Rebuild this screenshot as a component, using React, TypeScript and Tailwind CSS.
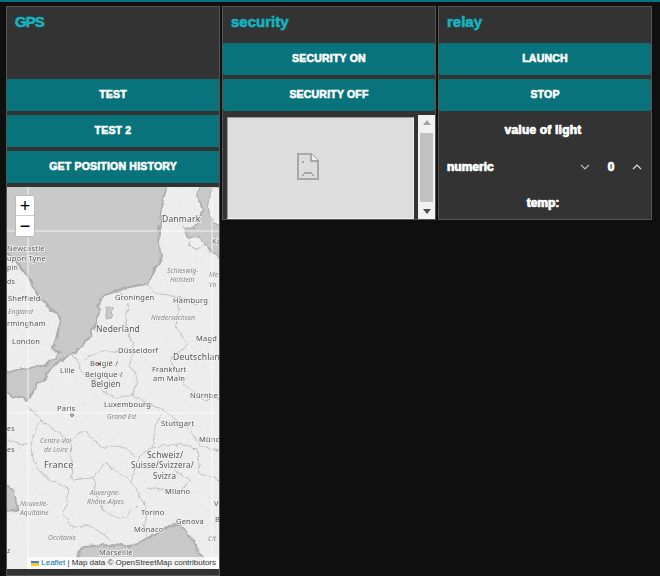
const sans = "font-['Liberation_Sans',Arial,sans-serif]";
const lcd = "[text-shadow:-0.4px_0_#9cf,0.4px_0_#fc9]";

function Btn({ children, rounded }: { children: string; rounded?: boolean }) {
  return (
    <button className={`h-8 w-full bg-[#08737a] pb-[1px] text-white text-[10.5px] font-bold uppercase tracking-[0.2px] [-webkit-text-stroke:0.6px_white] ${rounded ? "rounded-[2px]" : ""}`}>
      {children}
    </button>
  );
}

function Title({ children, tight }: { children: string; tight?: boolean }) {
  return <h2 className={`text-[15px] leading-[20px] font-bold text-[#13b4c2] [-webkit-text-stroke:0.6px_#13b4c2] ${tight ? "tracking-[-1px]" : ""}`}>{children}</h2>;
}

const cities: [string, number, number, number][] = [
  ["Danmark", 162, 222, 8.5],
  ["Ka", 212, 244, 7.5],
  ["Newcastle", 7, 251, 7.5],
  ["upon Tyne", 7, 261, 7.5],
  ["pin", 7, 270, 7],
  ["ds", 7, 284, 7],
  ["Sheffield", 8, 301, 7.5],
  ["rmingham", 7, 326, 7.5],
  ["London", 12, 344, 7.5],
  ["Groningen", 115, 300, 7.5],
  ["Hamburg", 173, 303, 7.5],
  ["Nederland", 96, 332, 8.5],
  ["Düsseldorf", 118, 353, 7.5],
  ["Deutschlan", 173, 360, 8.5],
  ["België /", 90, 366, 7.5],
  ["Belgique /", 85, 377, 7.5],
  ["Belgien", 91, 387, 8],
  ["Lille", 60, 373, 7.5],
  ["Frankfurt", 152, 372, 7.5],
  ["am Main", 153, 381, 7.5],
  ["Magd", 196, 341, 7.5],
  ["Luxembourg", 104, 407, 7.5],
  ["Nürnbe", 190, 398, 7.5],
  ["Paris", 57, 411, 7.5],
  ["Stuttgart", 161, 426, 7.5],
  ["Münc", 199, 442, 7.5],
  ["es", 7, 431, 7],
  ["es", 7, 452, 7],
  ["France", 44, 468, 9],
  ["Schweiz/", 147, 458, 8.5],
  ["Suisse/Svizzera/", 131, 468, 8],
  ["Svizra", 153, 479, 8],
  ["Milano", 165, 494, 7.5],
  ["V", 214, 506, 7.5],
  ["Torino", 141, 515, 7.5],
  ["B", 215, 522, 7.5],
  ["Genova", 176, 524, 7.5],
  ["Monaco", 134, 532, 7.5],
  ["z", 7, 553, 7],
  ["Marseille", 99, 555, 7.5],
];

const regions: [string, number, number][] = [
  ["Schleswig-", 167, 273],
  ["Me", 209, 277],
  ["Holstein", 170, 282],
  ["Vo", 209, 287],
  ["England", 8, 314],
  ["Niedersachsen", 151, 320],
  ["Grand Est", 107, 419],
  ["Centre-Val", 40, 443],
  ["de Loire", 44, 452],
  ["Auvergne-", 90, 495],
  ["Rhône-Alpes", 87, 504],
  ["Nouvelle-", 20, 506],
  ["Aquitaine", 20, 515],
  ["Occitanie", 48, 540],
  ["Cit", 208, 541],
];

function MapArt() {
  return (
    <svg viewBox="7 187 212 382" className="block h-[382px] w-[212px]">
      <defs>
        <filter id="terrain" x="0" y="0" width="100%" height="100%">
          <feTurbulence type="fractalNoise" baseFrequency="0.32" numOctaves="3" seed="7" />
          <feColorMatrix values="0 0 0 0 0.6  0 0 0 0 0.6  0 0 0 0 0.6  1.3 0 0 0 -0.5" />
        </filter>
        <filter id="wobble" x="-5%" y="-5%" width="110%" height="110%">
          <feTurbulence type="fractalNoise" baseFrequency="0.12" numOctaves="3" seed="3" result="n" />
          <feDisplacementMap in="SourceGraphic" in2="n" scale="6" xChannelSelector="R" yChannelSelector="G" />
        </filter>
        <filter id="soft"><feGaussianBlur stdDeviation="0.4" /></filter>
      </defs>
      <g filter="url(#soft)">
        <rect x="7" y="187" width="212" height="382" fill="#efefef" />
        <rect x="7" y="187" width="212" height="382" filter="url(#terrain)" opacity="0.3" />
        <g filter="url(#wobble)">
          {/* North Sea and Channel */}
          <path
            d="M0 180H168L163 200L160 220L158 244L163 254L155 270L150 280L145 285L118 290L100 300L97 320L87 340L74 353L57 362L40 382L27 400L13 395L0 390V373L47 365L60 353L53 348L62 318L43 303L27 275L18 265L0 245Z"
            fill="#c9c9c9" stroke="#adadad" strokeWidth="2"
          />
          {/* IJsselmeer */}
          <path d="M106 306L114 308L113 318L106 319Z" fill="#c9c9c9" stroke="#adadad" />
          {/* Kattegat and Baltic */}
          <path d="M198 180H226V262L212 252L205 245L190 240L183 228L193 230L203 210L198 200Z" fill="#c9c9c9" stroke="#adadad" strokeWidth="1.5" />
          <path d="M212 187H226V228L212 222L208 208Z" fill="#efefef" stroke="#adadad" />
          <path d="M190 238L199 236L204 243L197 249L189 245Z" fill="#efefef" stroke="#adadad" />
          {/* Biscay */}
          <path d="M0 480L14 492L18 510L0 512Z" fill="#c9c9c9" stroke="#adadad" strokeWidth="1.5" />
          {/* Mediterranean */}
          <path d="M77 580V558L83 546L110 545L130 546L147 539L170 526L180 524L190 536L203 558L208 580Z" fill="#c9c9c9" stroke="#adadad" strokeWidth="2" />
          {/* Borders */}
          <g fill="none" stroke="#c0c0c0" strokeWidth="1">
            <path d="M118 290L128 305L125 325L132 340L135 352L128 365L138 380L132 395L118 398L105 392L92 380L82 372L78 360L67 353" />
            <path d="M85 358L100 352L118 352M92 380L104 372L124 376" />
            <path d="M132 395L150 404L163 410L155 425L151 448L140 455L131 482L138 493" />
            <path d="M145 285L160 295L180 297L195 305M180 297L176 325L188 345L170 360L185 385L205 400L219 398" />
            <path d="M163 410L172 418L190 430L201 446L219 450" />
            <path d="M151 448L175 445L197 448L200 474L219 480M138 493L147 510L144 525L147 539M172 470L190 480L180 490L160 490L147 487" />
            <path d="M28 404L40 420L30 445L36 470L69 490L64 515L72 528L90 525L110 540M40 420L70 440L85 430L100 448L120 445L135 455" />
            <path d="M70 440L72 480L93 478L105 462L130 482M93 478L102 510L122 520L138 505M7 440L28 445" />
          </g>
        </g>
        {cities.map(([t, x, y, s]) => (
          <text key={t + y} x={x} y={y} fontSize={s} fill="#555" stroke="#f3f3f3" strokeWidth="1.5" paintOrder="stroke" fontFamily="'Noto Sans',sans-serif" letterSpacing="0.2">{t}</text>
        ))}
        {regions.map(([t, x, y]) => (
          <text key={t + y} x={x} y={y} fontSize="6.8" fontStyle="italic" fill="#858585" stroke="#f3f3f3" strokeWidth="1.2" paintOrder="stroke" fontFamily="'Noto Sans',sans-serif">{t}</text>
        ))}
        <circle cx="99" cy="364" r="1.3" fill="#a33" />
        <circle cx="72" cy="415" r="1.4" fill="none" stroke="#666" />
        {/* tile seams */}
        <path d="M7 231H219M7 413H219M28 187V569M212 187V569" stroke="#fff" strokeWidth="0.9" fill="none" opacity="0.85" />
      </g>
    </svg>
  );
}

export default function App() {
  return (
    <div className={`h-[576px] w-[660px] overflow-hidden bg-[#0f0f0f] ${sans}`}>
      <div className="h-[2px] bg-[#08737a]" />
      <div className="flex items-start gap-[2px] pl-[6px] pt-1">
        <section className="h-[570px] w-[214px] border border-[#555] bg-[#333]">
          <div className="h-[72px] pl-2 pt-[5px]"><Title tight>GPS</Title></div>
          <div className="flex flex-col gap-1">
            <Btn>Test</Btn>
            <Btn>Test 2</Btn>
            <Btn>Get position history</Btn>
            <div className="relative h-[382px] overflow-hidden">
              <MapArt />
              <div className="absolute left-2 top-2 flex w-5 flex-col rounded-[2px] border border-[#bbb] bg-white text-black">
                <div className="flex h-5 items-center justify-center border-b border-[#ccc] text-[18px] leading-none">+</div>
                <div className="flex h-5 items-center justify-center text-[18px] leading-none">−</div>
              </div>
              <div className="absolute bottom-0 right-0 flex h-3 items-center bg-white/80 pl-1 pr-[3px] text-[8px] leading-none text-[#333] whitespace-nowrap">
                <svg width="8" height="5" viewBox="0 0 8 5" className="mr-[2px]"><rect width="8" height="2.5" fill="#4C7BE1" /><rect y="2.5" width="8" height="2.5" fill="#FFD500" /></svg>
                <span className="text-[#0078a8]">Leaflet</span>
                <span>&nbsp;| Map data © OpenStreetMap contributors</span>
              </div>
            </div>
          </div>
        </section>

        <section className="h-[214px] w-[214px] border border-[#555] bg-[#333]">
          <div className="h-9 pl-2 pt-[5px]"><Title>security</Title></div>
          <div className="flex flex-col gap-1">
            <Btn rounded>Security on</Btn>
            <Btn rounded>Security off</Btn>
            <div className="flex h-[104px]">
              <div className="ml-1 mt-[2px] flex h-[102px] w-[187px] items-center justify-center border border-[#999] border-b-[#eee] border-r-[#eee] bg-[#ddd] pr-[25px]">
                <svg width="22" height="27" viewBox="0 0 22 27" shapeRendering="crispEdges" className="-mt-[4px]">
                  <path d="M1 1H14L21 8V26H1Z" fill="none" stroke="#a8a8a8" strokeWidth="2" />
                  <path d="M14 1V8H21" fill="#eee" stroke="#a8a8a8" strokeWidth="2" />
                  <path d="M5 8h2v2H5zM7 19h8v2H7zM5 21h2v2H5zM15 21h2v2h-2z" fill="#a8a8a8" />
                </svg>
              </div>
              <div className="ml-1 flex w-[17px] flex-col items-center justify-between bg-[#f1f1f1] py-[5px]">
                <svg width="8" height="5" viewBox="0 0 8 5"><path d="M0 5L4 0L8 5Z" fill="#a3a3a3" /></svg>
                <div className="h-[69px] w-[13px] bg-[#c1c1c1]" />
                <svg width="8" height="5" viewBox="0 0 8 5"><path d="M0 0L4 5L8 0Z" fill="#505050" /></svg>
              </div>
            </div>
          </div>
        </section>

        <section className="h-[214px] w-[214px] border border-[#555] bg-[#333]">
          <div className="h-9 pl-2 pt-[5px]"><Title>relay</Title></div>
          <div className="flex flex-col gap-1">
            <Btn rounded>Launch</Btn>
            <Btn rounded>Stop</Btn>
          </div>
          <div className={`mt-[9px] pr-1 text-center text-[12px] font-bold tracking-[0.2px] leading-[20px] text-white [-webkit-text-stroke:0.4px_white] ${lcd}`}>value of light</div>
          <div className={`mt-[17px] flex h-5 items-center pl-2 text-[12px] font-bold text-white [-webkit-text-stroke:0.4px_white] ${lcd}`}>
            <span className="w-[133px]">numeric</span>
            <svg width="10" height="6" viewBox="0 0 10 6"><path d="M1 1L5 5L9 1" fill="none" stroke="#bbb" strokeWidth="1.2" /></svg>
            <span className="ml-[17px] w-[8px] text-center">0</span>
            <svg width="10" height="6" viewBox="0 0 10 6" className="ml-[17px]"><path d="M1 5L5 1L9 5" fill="none" stroke="#ddd" strokeWidth="1.2" /></svg>
          </div>
          <div className={`mt-[16px] pr-1 text-center text-[12px] font-bold leading-[20px] text-white [-webkit-text-stroke:0.4px_white] ${lcd}`}>temp:</div>
        </section>
      </div>
    </div>
  );
}
